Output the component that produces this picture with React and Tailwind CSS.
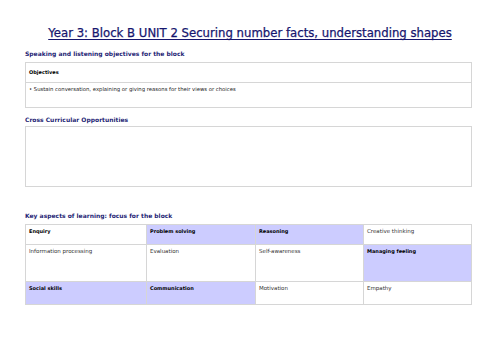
import React from 'react';

const font = { fontFamily: '"DejaVu Sans", "Liberation Sans", sans-serif' };

// Key aspects table: [label, highlighted, bold]
const rows = [
  [
    ['Enquiry', false, true],
    ['Problem solving', true, true],
    ['Reasoning', true, true],
    ['Creative thinking', false, false],
  ],
  [
    ['Information processing', false, false],
    ['Evaluation', false, false],
    ['Self-awareness', false, false],
    ['Managing feeling', true, true],
  ],
  [
    ['Social skills', true, true],
    ['Communication', true, true],
    ['Motivation', false, false],
    ['Empathy', false, false],
  ],
];

const rowHeights = ['h-[20px]', 'h-[37px]', 'h-[22px]'];

const Heading = ({ children, className = '' }) => (
  <div className={`text-[6px] leading-[8px] font-bold text-[#1f1f75] ${className}`}>{children}</div>
);

export default function App() {
  return (
    <div className="w-[500px] h-[354px] bg-white overflow-hidden" style={font}>
      {/* Title */}
      <div className="pt-[26px] text-center text-[11.7px] leading-[14px] whitespace-nowrap">
        <span className="text-[#16166e] underline underline-offset-[2px] [-webkit-text-stroke:0.25px_#16166e]">
          Year 3: Block B UNIT 2 Securing number facts, understanding shapes
        </span>
      </div>

      <div className="pl-[25px] w-[472px]">
        {/* Speaking and listening */}
        <Heading className="mt-[10px]">Speaking and listening objectives for the block</Heading>
        <div className="mt-[4px] border border-[#d6d6d6]">
          <div className="h-[20px] border-b border-[#d6d6d6] px-[3px] flex items-center">
            <span className="text-[5px] font-bold text-black">Objectives</span>
          </div>
          <div className="h-[24px] px-[3px] pt-[3px] text-[5.3px] leading-[7px] text-[#222]">
            • Sustain conversation, explaining or giving reasons for their views or choices
          </div>
        </div>

        {/* Cross curricular */}
        <Heading className="mt-[8px]">Cross Curricular Opportunities</Heading>
        <div className="mt-[2px] h-[61px] border border-[#d6d6d6]" />

        {/* Key aspects */}
        <Heading className="mt-[25px]">Key aspects of learning: focus for the block</Heading>
        <div className="mt-[4px] border border-[#d6d6d6] grid grid-cols-[121px_109px_108px_1fr]">
          {rows.map((row, r) =>
            row.map(([label, hi, bold], c) => (
              <div
                key={`${r}-${c}`}
                className={`${rowHeights[r]} px-[3px] pt-[3px] leading-[7px] ${
                  hi ? 'bg-[#ccccff]' : 'bg-white'
                } ${bold ? 'text-[5px] font-bold text-black' : 'text-[5.5px] text-[#333]'} ${
                  c < 3 ? 'border-r border-[#d6d6d6]' : ''
                } ${r < 2 ? 'border-b border-[#d6d6d6]' : ''}`}
              >
                {label}
              </div>
            ))
          )}
        </div>
      </div>
    </div>
  );
}
